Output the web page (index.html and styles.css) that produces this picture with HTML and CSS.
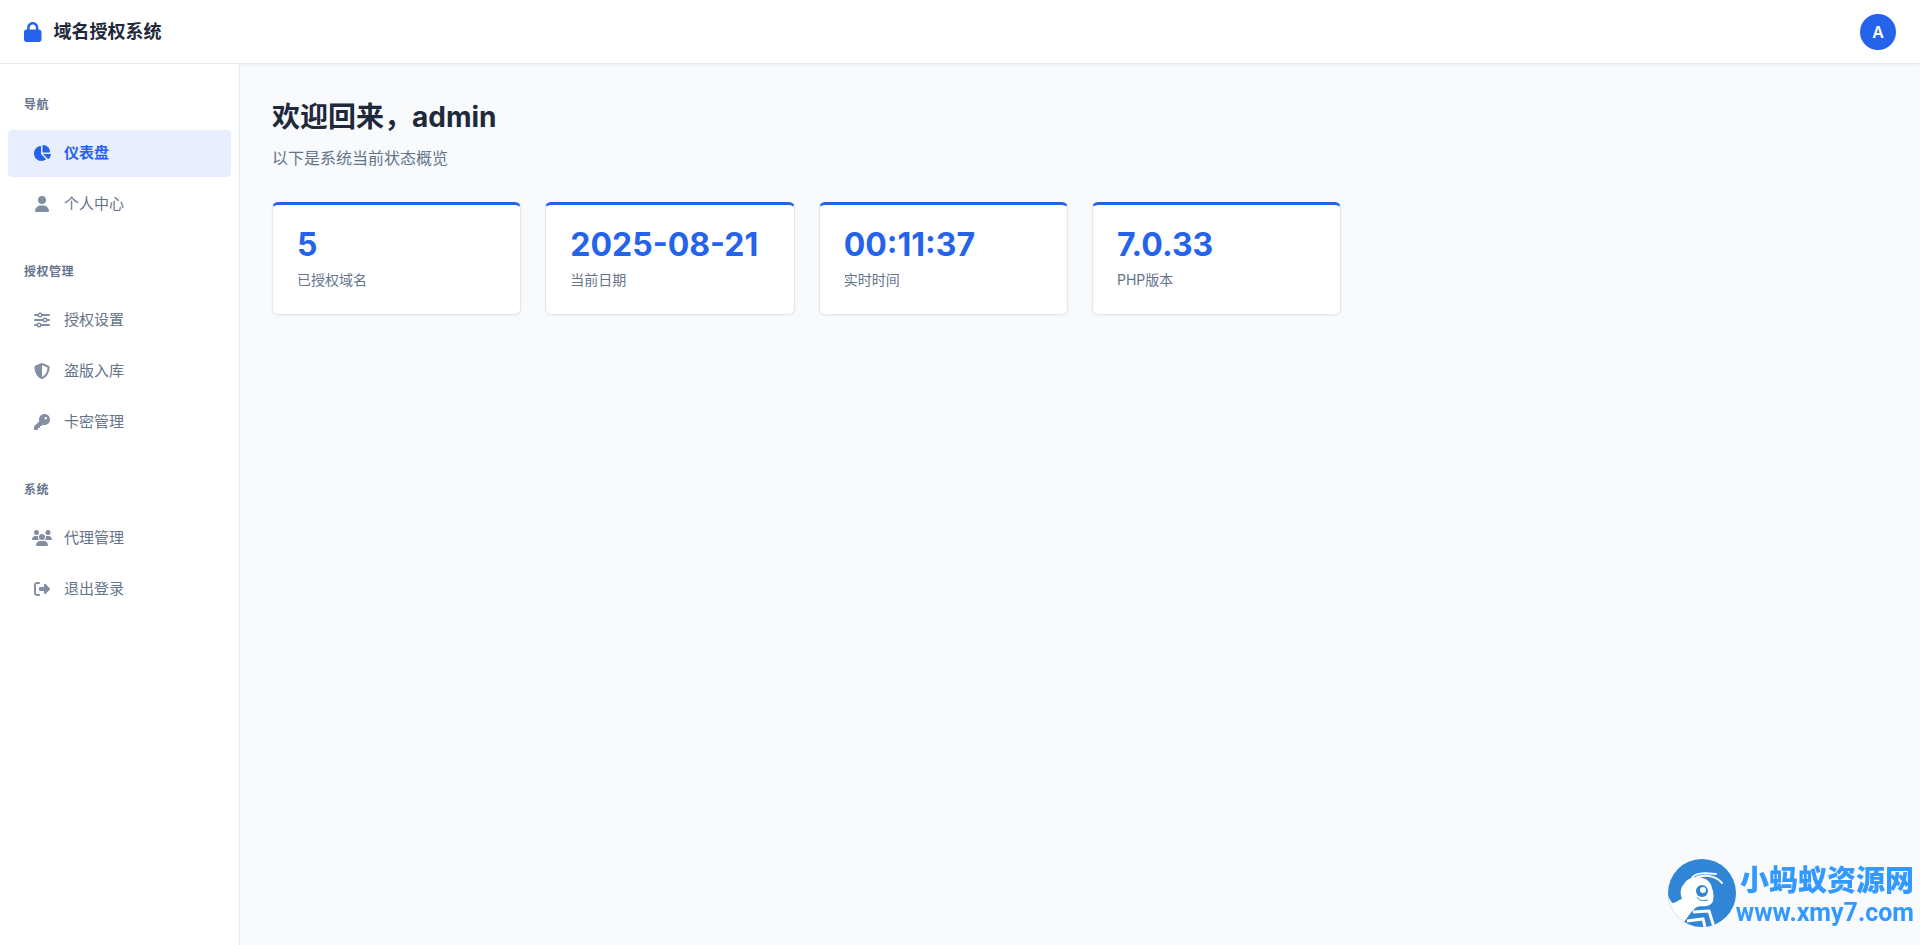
FILE: index.html
```html
<!DOCTYPE html>
<html lang="zh-CN">
<head>
  <meta charset="UTF-8">
  <meta name="viewport" content="width=device-width, initial-scale=1.0">
  <title>域名授权系统</title>
  <link rel="stylesheet" href="styles.css">
</head>
<body>
  <header class="header">
    <a href="#" class="logo">
      <svg class="logo-icon" viewBox="0 0 448 512"><path d="M144 144v48H304V144c0-44.2-35.8-80-80-80s-80 35.8-80 80zM80 192V144C80 64.5 144.5 0 224 0s144 64.5 144 144v48h16c35.3 0 64 28.7 64 64V448c0 35.3-28.7 64-64 64H64c-35.3 0-64-28.7-64-64V256c0-35.3 28.7-64 64-64H80z"/></svg>
      <span>域名授权系统</span>
    </a>
    <button type="button" class="avatar">A</button>
  </header>

  <div class="container">
    <aside class="sidebar">
      <nav>
        <div class="nav-section">
          <h2 class="nav-title">导航</h2>
          <a href="#" class="nav-item active">
            <svg class="nav-icon" viewBox="0 0 576 512"><path d="M304 240V16.6c0-9 7-16.6 16-16.6C443.7 0 544 100.3 544 224c0 9-7.6 16-16.6 16H304zM32 272C32 150.7 122.1 50.3 239 34.3c9.2-1.3 17 6.1 17 15.4V288L412.5 444.5c6.7 6.7 6.2 17.7-1.5 23.1C371.8 495.6 323.8 512 272 512C139.5 512 32 404.6 32 272zm526.4 16c9.3 0 16.6 7.8 15.4 17c-7.7 55.9-34.6 105.6-73.9 142.3c-6 5.6-15.4 5.2-21.2-.7L320 288H558.4z"/></svg>
            <span>仪表盘</span>
          </a>
          <a href="#" class="nav-item">
            <svg class="nav-icon" viewBox="0 0 448 512"><path d="M224 256A128 128 0 1 0 224 0a128 128 0 1 0 0 256zm-45.7 48C79.8 304 0 383.8 0 482.3C0 498.7 13.3 512 29.7 512H418.3c16.4 0 29.7-13.3 29.7-29.7C448 383.8 368.2 304 269.7 304H178.3z"/></svg>
            <span>个人中心</span>
          </a>
        </div>

        <div class="nav-section">
          <h2 class="nav-title">授权管理</h2>
          <a href="#" class="nav-item">
            <svg class="nav-icon" viewBox="0 0 512 512">
              <g fill="none" stroke="currentColor" stroke-linecap="round">
                <path stroke-width="64" d="M32 96H110M274 96H480M32 256H270M434 256H480M32 416H78M242 416H480"/>
                <g stroke-width="48"><circle cx="192" cy="96" r="56"/><circle cx="352" cy="256" r="56"/><circle cx="160" cy="416" r="56"/></g>
              </g>
            </svg>
            <span>授权设置</span>
          </a>
          <a href="#" class="nav-item">
            <svg class="nav-icon" viewBox="0 0 512 512"><path d="M256 0c4.6 0 9.2 1 13.4 2.9L457.7 82.8c22 9.3 38.4 31 38.3 57.2c-.5 99.2-41.3 280.7-213.6 363.2c-16.7 8-36.1 8-52.8 0C57.3 420.7 16.5 239.2 16 140c-.1-26.2 16.3-47.9 38.3-57.2L242.7 2.9C246.8 1 251.4 0 256 0zm0 66.8V444.8C394 378 431.1 230.1 432 141.4L256 66.8l0 0z"/></svg>
            <span>盗版入库</span>
          </a>
          <a href="#" class="nav-item">
            <svg class="nav-icon" viewBox="0 0 512 512"><path d="M336 352c97.2 0 176-78.8 176-176S433.2 0 336 0S160 78.8 160 176c0 18.7 2.9 36.8 8.3 53.7L7 391c-4.5 4.5-7 10.6-7 17v80c0 13.3 10.7 24 24 24h80c13.3 0 24-10.7 24-24V448h40c13.3 0 24-10.7 24-24V384h40c6.4 0 12.5-2.5 17-7l33.3-33.3c16.9 5.4 35 8.3 53.7 8.3zM376 96a40 40 0 1 1 0 80 40 40 0 1 1 0-80z"/></svg>
            <span>卡密管理</span>
          </a>
        </div>

        <div class="nav-section">
          <h2 class="nav-title">系统</h2>
          <a href="#" class="nav-item">
            <svg class="nav-icon" viewBox="0 0 640 512"><path d="M144 0a80 80 0 1 1 0 160A80 80 0 1 1 144 0zM512 0a80 80 0 1 1 0 160A80 80 0 1 1 512 0zM0 298.7C0 239.8 47.8 192 106.7 192h42.7c15.9 0 31 3.5 44.6 9.7c-1.3 7.2-1.9 14.7-1.9 22.3c0 38.2 16.8 72.5 43.3 96c-.2 0-.4 0-.7 0H21.3C9.6 320 0 310.4 0 298.7zM405.3 320c-.2 0-.4 0-.7 0c26.6-23.5 43.3-57.8 43.3-96c0-7.6-.7-15-1.9-22.3c13.6-6.3 28.7-9.7 44.6-9.7h42.7C592.2 192 640 239.8 640 298.7c0 11.8-9.6 21.3-21.3 21.3H405.3zM224 224a96 96 0 1 1 192 0 96 96 0 1 1 -192 0zM128 485.3C128 411.7 187.7 352 261.3 352H378.7C452.3 352 512 411.7 512 485.3c0 14.7-11.9 26.7-26.7 26.7H154.7c-14.7 0-26.7-11.9-26.7-26.7z"/></svg>
            <span>代理管理</span>
          </a>
          <a href="#" class="nav-item">
            <svg class="nav-icon" viewBox="0 0 512 512"><path d="M377.9 105.9L500.7 228.7c7.2 7.2 11.3 17.1 11.3 27.3s-4.1 20.1-11.3 27.3L377.9 406.1c-6.4 6.4-15 9.9-24 9.9c-18.7 0-33.9-15.2-33.9-33.9l0-62.1-128 0c-17.7 0-32-14.3-32-32l0-64c0-17.7 14.3-32 32-32l128 0 0-62.1c0-18.7 15.2-33.9 33.9-33.9c9 0 17.6 3.6 24 9.9zM160 96L96 96c-17.7 0-32 14.3-32 32l0 256c0 17.7 14.3 32 32 32l64 0c17.7 0 32 14.3 32 32s-14.3 32-32 32l-64 0c-53 0-96-43-96-96L0 128C0 75 43 32 96 32l64 0c17.7 0 32 14.3 32 32s-14.3 32-32 32z"/></svg>
            <span>退出登录</span>
          </a>
        </div>
      </nav>
    </aside>

    <main class="main">
      <h1 class="welcome-title">欢迎回来，admin</h1>
      <p class="welcome-text">以下是系统当前状态概览</p>

      <div class="stats">
        <div class="stat-card">
          <div class="stat-value">5</div>
          <div class="stat-label">已授权域名</div>
        </div>
        <div class="stat-card">
          <div class="stat-value">2025-08-21</div>
          <div class="stat-label">当前日期</div>
        </div>
        <div class="stat-card">
          <div class="stat-value">00:11:37</div>
          <div class="stat-label">实时时间</div>
        </div>
        <div class="stat-card">
          <div class="stat-value">7.0.33</div>
          <div class="stat-label">PHP版本</div>
        </div>
      </div>
    </main>
  </div>

  <!-- site badge, bottom right -->
  <a href="#" class="badge">
    <svg class="badge-logo" viewBox="0 0 68 68">
      <clipPath id="round"><circle cx="34" cy="34" r="34"/></clipPath>
      <g clip-path="url(#round)">
        <rect width="68" height="68" fill="#3085d6"/>
        <path fill="#fff" d="M0 37L4 44C8 44 10 41 14 40C12 35 12 29 16 25C19 20 24 18 29 18C38 18 43 23 44 29C46 34 46 41 44 44C40 49 33 46 29 48C24 51 20 58 16 63L10 68H0Z"/>
        <path fill="none" stroke="#fff" stroke-width="2" stroke-linecap="round" d="M24 19C28 13 38 14 48 15M29 18C40 15 49 18 54 24"/>
        <circle cx="34" cy="32" r="6" fill="#3085d6"/>
        <circle cx="35" cy="31" r="3" fill="#fff"/>
        <path fill="none" stroke="#3085d6" stroke-width="1" d="M29 38C31 42 36 42 40 41"/>
        <path fill="none" stroke="#fff" stroke-width="3" d="M25 53L41 52L46 68M19 62L35 60L37 68"/>
      </g>
    </svg>
    <span class="badge-text">
      <span class="badge-name">小蚂蚁资源网</span>
      <span class="badge-url">www.xmy7.com</span>
    </span>
  </a>
</body>
</html>
```
FILE: styles.css
```css
:root {
  --primary: #2563eb;
  --primary-light: #e8eefd;
  --text: #1e293b;
  --text-light: #64748b;
  --border: #e2e8f0;
  --bg: #f8fafc;
}
* {
  margin: 0;
  padding: 0;
  box-sizing: border-box;
}
body {
  min-height: 100vh;
  display: flex;
  flex-direction: column;
  font-family: Inter, "Noto Sans CJK SC", sans-serif;
  color: var(--text);
  background-color: var(--bg);
}
a {
  text-decoration: none;
}

/* Header */
.header {
  height: 64px;
  padding: 0 24px;
  display: flex;
  align-items: center;
  justify-content: space-between;
  background-color: white;
  border-bottom: 1px solid var(--border);
  box-shadow: 0 1px 3px rgba(0, 0, 0, 0.05);
}
.logo {
  display: flex;
  align-items: center;
  gap: 12px;
  font-size: 18px;
  font-weight: 600;
  line-height: 27px;
  color: var(--text);
}
.logo-icon {
  height: 20px;
  fill: var(--primary);
}
.avatar {
  width: 36px;
  height: 36px;
  border: none;
  border-radius: 50%;
  font-family: inherit;
  font-size: 16px;
  font-weight: 600;
  color: white;
  background-color: var(--primary);
  cursor: pointer;
}

/* Sidebar */
.container {
  flex: 1;
  display: flex;
}
.sidebar {
  width: 240px;
  flex-shrink: 0;
  padding-top: 32px;
  background-color: white;
  border-right: 1px solid var(--border);
}
.nav-section {
  margin-bottom: 35px;
}
.nav-title {
  margin-bottom: 16px;
  padding: 0 24px;
  font-size: 12px;
  font-weight: 600;
  line-height: 18px;
  letter-spacing: 0.5px;
  color: var(--text-light);
}
.nav-item {
  display: flex;
  align-items: center;
  gap: 12px;
  margin: 0 8px 4px;
  padding: 12px 24px 13px;
  border-radius: 4px;
  font-size: 15px;
  line-height: 22px;
  color: var(--text-light);
}
.nav-icon {
  width: 20px;
  height: 16px;
  fill: currentColor;
  opacity: 0.8;
}
.nav-item.active {
  font-weight: 600;
  color: var(--primary);
  background-color: var(--primary-light);
}
.nav-item.active .nav-icon {
  opacity: 1;
}

/* Main content */
.main {
  flex: 1;
  padding: 32px;
}
.welcome-title {
  margin-bottom: 8px;
  font-size: 28px;
  font-weight: 700;
  line-height: 42px;
}
.welcome-text {
  margin-bottom: 32px;
  font-size: 16px;
  line-height: 24px;
  color: var(--text-light);
}
.stats {
  display: grid;
  grid-template-columns: repeat(auto-fill, minmax(240px, 1fr));
  gap: 24px;
}
.stat-card {
  padding: 24px;
  background-color: white;
  border: 1px solid var(--border);
  border-top: 3px solid var(--primary);
  border-radius: 6px;
  box-shadow: 0 1px 3px rgba(0, 0, 0, 0.05);
}
.stat-value {
  margin-bottom: 8px;
  font-size: 32px;
  font-weight: 700;
  line-height: 32px;
  color: var(--primary);
}
.stat-label {
  font-size: 14px;
  line-height: 21px;
  color: var(--text-light);
}

/* Badge */
.badge {
  position: fixed;
  right: 6px;
  bottom: 17px;
  display: flex;
  align-items: center;
  color: #3399ff;
}
.badge-logo {
  width: 68px;
  height: 68px;
}
.badge-text {
  display: flex;
  flex-direction: column;
  align-items: flex-end;
}
.badge-name {
  font-family: "Noto Sans CJK SC", sans-serif;
  font-size: 29px;
  font-weight: 900;
  line-height: 40px;
}
.badge-url {
  font-family: Roboto, sans-serif;
  font-size: 25px;
  font-weight: 700;
  line-height: 30px;
}
```
